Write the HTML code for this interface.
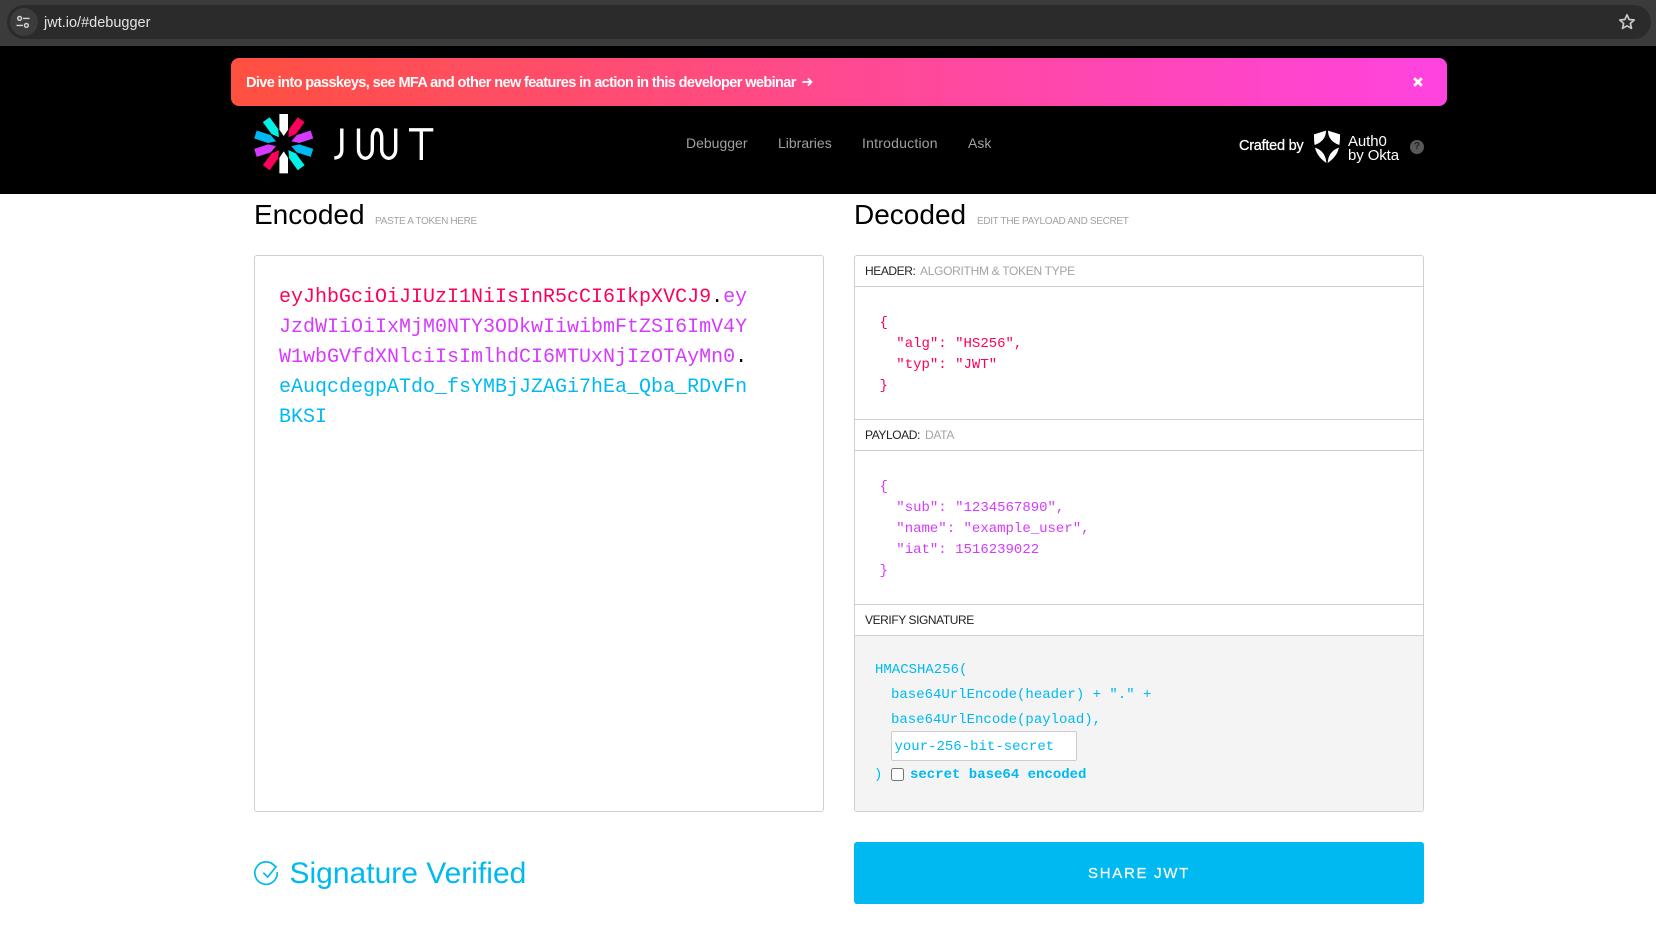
<!DOCTYPE html>
<html><head><meta charset="utf-8"><title>JWT</title>
<style>
html,body{margin:0;padding:0;background:#fff;}
body{width:1656px;height:944px;position:relative;overflow:hidden;font-family:"Liberation Sans",sans-serif;}
.a{position:absolute;white-space:pre;line-height:1;}
.m{font-family:"Liberation Mono",monospace;}
.box{position:absolute;box-sizing:border-box;border:1px solid #cfcfd6;}
.ln{position:absolute;height:1px;background:#cfcfd2;left:854px;width:570px;}
.lab{font-size:12px;color:#222;letter-spacing:-.42px;}
.sub{font-size:12px;color:#a4a4a4;letter-spacing:-.3px;}
.h2{font-size:28px;color:#000;}
.hs{font-size:10px;color:#a2a2a2;letter-spacing:-.33px;}
.nav{font-size:14px;color:#a0a0a0;}
.c14{font-size:14px;}
.tok{font-size:20px;letter-spacing:0;}
.red{color:#fb015b}.pur{color:#d63aff}.blu{color:#00b9f1}
</style></head><body>
<!-- browser bar -->
<div class="a" style="left:0;top:0;width:1656px;height:46px;background:#3b3b3b;"></div>
<div class="a" style="left:7px;top:5px;width:1644px;height:34px;background:#2b2b2b;border-radius:17px;"></div>
<div class="a" style="left:10px;top:8px;width:28px;height:28px;background:#3c3c3c;border-radius:50%;"></div>
<svg class="a" style="left:16px;top:15px;" width="14" height="14" viewBox="0 0 14 14" fill="none" stroke="#d8d8d8" stroke-width="1.4"><circle cx="3.6" cy="3.4" r="1.9"/><path d="M7 3.4h6.5M.5 10.4h6.5"/><circle cx="10.4" cy="10.4" r="1.9"/></svg>
<div class="a" style="left:44px;top:15.5px;font-size:14.5px;color:#e3e3e3;">jwt.io/#debugger</div>
<svg class="a" style="left:1618px;top:13px;" width="18" height="18" viewBox="0 0 18 18" fill="none" stroke="#c8c8c8" stroke-width="1.7" stroke-linejoin="round"><path d="M9 1.8l2.1 4.7 5.1.5-3.8 3.4 1.1 5-4.5-2.6-4.5 2.6 1.1-5L1.8 7l5.1-.5z"/></svg>
<!-- header -->
<div class="a" style="left:0;top:46px;width:1656px;height:148px;background:#000;"></div>
<div class="a" style="left:231px;top:58px;width:1216px;height:48px;border-radius:8px;background:linear-gradient(90deg,#ff5040,#ff43e0);"></div>
<div class="a" style="left:246px;top:75.5px;font-size:14.5px;font-weight:bold;color:#fff;letter-spacing:-.6px;">Dive into passkeys, see MFA and other new features in action in this developer webinar</div>
<svg class="a" style="left:802px;top:77px;" width="11" height="10" viewBox="0 0 11 10" fill="none" stroke="#fff" stroke-width="1.8"><path d="M0.5 5h9M6 1.5L9.5 5 6 8.5"/></svg>
<svg class="a" style="left:1413px;top:77px;" width="10" height="10" viewBox="0 0 10 10" stroke="#fff" stroke-width="2.8"><path d="M1.2 1.2l7.6 7.6M8.8 1.2L1.2 8.8"/></svg>
<!-- logo -->
<svg class="a" style="left:250px;top:110px;" width="68" height="68" viewBox="-33.7 -33.7 68 68">
<polygon fill="#fff" points="-4.3,-29.7 4.3,-29.7 4.3,-14 0,-7.7 -4.3,-14"/>
<polygon fill="#fb015b" transform="rotate(36)" points="-4.2,-29.7 4.2,-29.7 4.2,-15 0,-8 -4.2,-15"/>
<polygon fill="#d63aff" transform="rotate(72)" points="-4.2,-29.7 4.2,-29.7 4.2,-15 0,-8 -4.2,-15"/>
<polygon fill="#00b9f1" transform="rotate(108)" points="-4.2,-29.7 4.2,-29.7 4.2,-15 0,-8 -4.2,-15"/>
<polygon fill="#00f2e6" transform="rotate(144)" points="-4.2,-29.7 4.2,-29.7 4.2,-15 0,-8 -4.2,-15"/>
<polygon fill="#fff" transform="rotate(180)" points="-4.3,-29.7 4.3,-29.7 4.3,-14 0,-7.7 -4.3,-14"/>
<polygon fill="#fb015b" transform="rotate(216)" points="-4.2,-29.7 4.2,-29.7 4.2,-15 0,-8 -4.2,-15"/>
<polygon fill="#d63aff" transform="rotate(252)" points="-4.2,-29.7 4.2,-29.7 4.2,-15 0,-8 -4.2,-15"/>
<polygon fill="#00b9f1" transform="rotate(288)" points="-4.2,-29.7 4.2,-29.7 4.2,-15 0,-8 -4.2,-15"/>
<polygon fill="#00f2e6" transform="rotate(324)" points="-4.2,-29.7 4.2,-29.7 4.2,-15 0,-8 -4.2,-15"/>
</svg>
<svg class="a" style="left:330px;top:124px;" width="110" height="40" viewBox="330 124 110 40" fill="none" stroke="#fff" stroke-width="3.4">
<path d="M341.8 128.5V150q0 7.5-7.5 8"/>
<path d="M358.5 128.5V149.5a6.9 8.8 0 0 0 13.8 0V137.5a4.7 8 0 0 1 9.4 0V149.5a7 8.8 0 0 0 14 0V128.5"/>
<path d="M409 129.8H433.3M421.3 129.8V160"/>
</svg>
<div class="a nav" style="left:686px;top:136px;">Debugger</div>
<div class="a nav" style="left:778px;top:136px;">Libraries</div>
<div class="a nav" style="left:862px;top:136px;letter-spacing:.22px;">Introduction</div>
<div class="a nav" style="left:968px;top:136px;">Ask</div>
<div class="a" style="left:1239px;top:138.5px;font-size:14.5px;color:#fff;letter-spacing:-.25px;-webkit-text-stroke:.25px #fff;">Crafted by</div>
<svg class="a" style="left:1310px;top:126px;" width="36" height="40" viewBox="0 0 108 120" fill="#fff">
<path d="M12 25L48 14C48 33 38 49 14 57C12 46 12 36 12 25Z"/>
<path d="M90 25L54 14C54 33 64 49 88 57C90 46 90 36 90 25Z"/>
<path d="M15 65C36 72 48 88 49 111C33 100 20 86 15 65Z"/>
<path d="M87 65C66 72 54 88 53 111C69 100 82 86 87 65Z"/>
</svg>
<div class="a" style="left:1348px;top:134px;font-size:15px;color:#fff;letter-spacing:-.1px;">Auth0</div>
<div class="a" style="left:1348px;top:148px;font-size:15px;color:#fff;letter-spacing:-.1px;">by Okta</div>
<div class="a" style="left:1410px;top:140px;width:14px;height:14px;border-radius:50%;background:#58585a;color:#222;font-size:10px;line-height:14px;text-align:center;font-weight:bold;">?</div>
<!-- titles -->
<div class="a h2" style="left:254px;top:201px;">Encoded</div>
<div class="a hs" style="left:375px;top:216.5px;">PASTE A TOKEN HERE</div>
<div class="a h2" style="left:854px;top:201px;">Decoded</div>
<div class="a hs" style="left:977px;top:216.5px;">EDIT THE PAYLOAD AND SECRET</div>
<!-- encoded -->
<div class="box" style="left:254px;top:255px;width:570px;height:557px;border-radius:3px;"></div>
<div class="a m tok red" style="left:279px;top:288px;">eyJhbGciOiJIUzI1NiIsInR5cCI6IkpXVCJ9<span style="color:#000">.</span><span class="pur">ey</span></div>
<div class="a m tok pur" style="left:279px;top:318px;">JzdWIiOiIxMjM0NTY3ODkwIiwibmFtZSI6ImV4Y</div>
<div class="a m tok pur" style="left:279px;top:348px;">W1wbGVfdXNlciIsImlhdCI6MTUxNjIzOTAyMn0<span style="color:#000">.</span></div>
<div class="a m tok blu" style="left:279px;top:378px;">eAuqcdegpATdo_fsYMBjJZAGi7hEa_Qba_RDvFn</div>
<div class="a m tok blu" style="left:279px;top:408px;">BKSI</div>
<!-- decoded -->
<div class="box" style="left:854px;top:255px;width:570px;height:557px;border-radius:3px;"></div>
<div class="ln" style="top:286px;"></div>
<div class="ln" style="top:419px;"></div>
<div class="ln" style="top:450px;"></div>
<div class="ln" style="top:604px;"></div>
<div class="ln" style="top:635px;"></div>
<div class="a" style="left:855px;top:636px;width:568px;height:175px;background:#f4f4f4;border-radius:0 0 3px 3px;"></div>
<div class="a lab" style="left:865px;top:265px;">HEADER:</div>
<div class="a sub" style="left:920px;top:265px;">ALGORITHM &amp; TOKEN TYPE</div>
<div class="a lab" style="left:865px;top:429px;">PAYLOAD:</div>
<div class="a sub" style="left:925px;top:429px;">DATA</div>
<div class="a lab" style="left:865px;top:614px;">VERIFY SIGNATURE</div>
<div class="a m c14 red" style="left:879.5px;top:313px;line-height:21px;">{
  "alg": "HS256",
  "typ": "JWT"
}</div>
<div class="a m c14 pur" style="left:879.5px;top:477px;line-height:21px;">{
  "sub": "1234567890",
  "name": "example_user",
  "iat": 1516239022
}</div>
<div class="a m c14 blu" style="left:875px;top:662.5px;">HMACSHA256(</div>
<div class="a m c14 blu" style="left:891px;top:687.5px;">base64UrlEncode(header) + "." +</div>
<div class="a m c14 blu" style="left:891px;top:712.5px;">base64UrlEncode(payload),</div>
<div class="a" style="left:891px;top:731px;width:186px;height:30px;box-sizing:border-box;background:#fff;border:1px solid #ccc;border-radius:2px;"></div>
<div class="a m c14 blu" style="left:894.5px;top:739.5px;">your-256-bit-secret</div>
<div class="a m c14 blu" style="left:874px;top:768px;">)</div>
<div class="a" style="left:891px;top:768px;width:13px;height:13px;box-sizing:border-box;background:#fff;border:1px solid #767676;border-radius:2.5px;"></div>
<div class="a m c14 blu" style="left:910px;top:768px;font-weight:bold;">secret base64 encoded</div>
<!-- footer -->
<svg class="a" style="left:253px;top:860px;" width="27" height="27" viewBox="0 0 27 27" fill="none" stroke="#00b9f1" stroke-width="1.7"><path d="M22.2 6.6A11.2 11.2 0 1 0 24.2 12"/><path d="M10.3 12.7l4.4 4.3 9-11"/></svg>
<div class="a blu" style="left:289.5px;top:859px;font-size:30px;">Signature Verified</div>
<div class="a" style="left:854px;top:842px;width:570px;height:62px;background:#00b9f1;border-radius:3px;"></div>
<div class="a" style="left:854px;top:866px;width:570px;text-align:center;color:#fff;font-size:15px;letter-spacing:1.7px;-webkit-text-stroke:.2px #fff;">SHARE JWT</div>
</body></html>
